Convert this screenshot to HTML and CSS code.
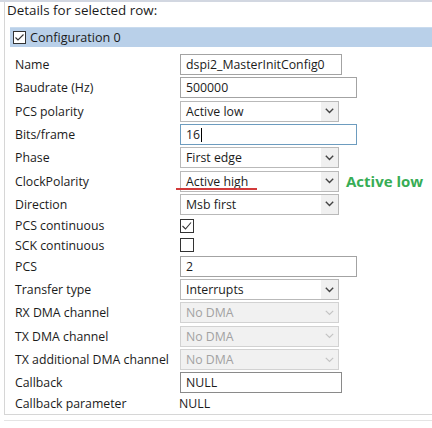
FILE: index.html
```html
<!DOCTYPE html>
<html>
<head>
<meta charset="utf-8">
<link rel="stylesheet" href="styles.css">
</head>
<body>
<div class="panel">
  <div class="title">Details for selected row:</div>
  <div class="group">
    <div class="group-header">
      <span class="cb cb-head"><svg width="13" height="13" viewBox="0 0 13 13"><polyline points="2.5,6.5 5,9 10.5,3.5" fill="none" stroke="#333" stroke-width="1.1"/></svg></span>
      <span class="group-title">Configuration 0</span>
    </div>
    <div class="rows">
      <div class="row"><div class="label">Name</div><div class="field text short">dspi2_MasterInitConfig0</div></div>
      <div class="row"><div class="label">Baudrate (Hz)</div><div class="field text long">500000</div></div>
      <div class="row"><div class="label">PCS polarity</div><div class="field select"><span class="val">Active low</span><span class="arrow"><svg width="9" height="6" viewBox="0 0 9 6"><polyline points="0.8,0.8 4.5,4.5 8.2,0.8" fill="none" stroke="#444" stroke-width="1.4"/></svg></span></div></div>
      <div class="row"><div class="label">Bits/frame</div><div class="field text long focus">16<span class="caret"></span></div></div>
      <div class="row"><div class="label">Phase</div><div class="field select"><span class="val">First edge</span><span class="arrow"><svg width="9" height="6" viewBox="0 0 9 6"><polyline points="0.8,0.8 4.5,4.5 8.2,0.8" fill="none" stroke="#444" stroke-width="1.4"/></svg></span></div></div>
      <div class="row"><div class="label">ClockPolarity</div><div class="field select marked"><span class="val">Active high</span><span class="arrow"><svg width="9" height="6" viewBox="0 0 9 6"><polyline points="0.8,0.8 4.5,4.5 8.2,0.8" fill="none" stroke="#444" stroke-width="1.4"/></svg></span><span class="underline"></span></div><span class="note">Active low</span></div>
      <div class="row"><div class="label">Direction</div><div class="field select"><span class="val">Msb first</span><span class="arrow"><svg width="9" height="6" viewBox="0 0 9 6"><polyline points="0.8,0.8 4.5,4.5 8.2,0.8" fill="none" stroke="#444" stroke-width="1.4"/></svg></span></div></div>
      <div class="row crow"><div class="label">PCS continuous</div><span class="cb"><svg width="14" height="14" viewBox="0 0 14 14"><polyline points="2.5,7 5.5,10 11,3.5" fill="none" stroke="#333" stroke-width="1.1"/></svg></span></div>
      <div class="row crow"><div class="label">SCK continuous</div><span class="cb"></span></div>
      <div class="row"><div class="label">PCS</div><div class="field text long">2</div></div>
      <div class="row"><div class="label">Transfer type</div><div class="field select"><span class="val">Interrupts</span><span class="arrow"><svg width="9" height="6" viewBox="0 0 9 6"><polyline points="0.8,0.8 4.5,4.5 8.2,0.8" fill="none" stroke="#444" stroke-width="1.4"/></svg></span></div></div>
      <div class="row"><div class="label">RX DMA channel</div><div class="field select disabled"><span class="val">No DMA</span><span class="arrow"><svg width="9" height="6" viewBox="0 0 9 6"><polyline points="0.8,0.8 4.5,4.5 8.2,0.8" fill="none" stroke="#c4c4c4" stroke-width="1.2"/></svg></span></div></div>
      <div class="row"><div class="label">TX DMA channel</div><div class="field select disabled"><span class="val">No DMA</span><span class="arrow"><svg width="9" height="6" viewBox="0 0 9 6"><polyline points="0.8,0.8 4.5,4.5 8.2,0.8" fill="none" stroke="#c4c4c4" stroke-width="1.2"/></svg></span></div></div>
      <div class="row"><div class="label">TX additional DMA channel</div><div class="field select disabled"><span class="val">No DMA</span><span class="arrow"><svg width="9" height="6" viewBox="0 0 9 6"><polyline points="0.8,0.8 4.5,4.5 8.2,0.8" fill="none" stroke="#c4c4c4" stroke-width="1.2"/></svg></span></div></div>
      <div class="row"><div class="label">Callback</div><div class="field text short dark">NULL</div></div>
      <div class="row prow"><div class="label">Callback parameter</div><div class="plain">NULL</div></div>
    </div>
  </div>
</div>
<div class="outer-bottom"></div>
</body>
</html>
```
FILE: styles.css
```css
html, body {
  margin: 0;
  padding: 0;
  background: #ffffff;
}
body {
  width: 432px;
  height: 428px;
  overflow: hidden;
  font-family: "Open Sans", "Noto Sans", sans-serif;
  font-size: 12.3px;
  color: #1b1b1b;
  border-top: 2px solid #d2d7e1;
  box-sizing: border-box;
}
.panel {
  margin-left: 4px;
  border-left: 1px solid #d6d6d6;
  border-bottom: 1px solid #d6d6d6;
  height: 413px;
  box-sizing: border-box;
}
.title {
  height: 25px;
  padding-left: 2px;
  font-size: 13.4px;
  line-height: 17px;
}
.group {
  margin-left: 5px;
}
.group-header {
  height: 19px;
  background: #b9d0e9;
  border-top: 1px solid #c9dbee;
  display: flex;
  align-items: center;
  padding-left: 3px;
  gap: 4px;
}
.group-title {
  font-size: 12.6px;
  line-height: 19px;
}
.cb {
  display: inline-block;
  width: 14px;
  height: 14px;
  box-sizing: border-box;
  border: 1px solid #333;
  background: #fff;
  position: relative;
}
.cb svg {
  position: absolute;
  left: -1px;
  top: -1px;
}
.cb-head {
  width: 13px;
  height: 13px;
}
.rows {
  padding-top: 6px;
}
.row {
  display: flex;
  align-items: center;
  height: 23.3px;
  position: relative;
}
.crow {
  height: 19.3px;
}
.prow {
  height: 18px;
}
.label {
  width: 165px;
  padding-left: 5px;
  flex: none;
  white-space: nowrap;
}
.field {
  height: 21px;
  box-sizing: border-box;
  border: 1px solid #a3a3a3;
  background: #fff;
  display: flex;
  align-items: center;
  padding-left: 5px;
  white-space: nowrap;
  position: relative;
}
.text.short { width: 162px; }
.text.long { width: 177px; }
.text.dark { border-color: #8a8a8a; }
.focus { border-color: #6d9cbf; }
.caret {
  display: inline-block;
  width: 1px;
  height: 14px;
  background: #000;
  margin-left: 1px;
}
.select {
  width: 159px;
  border-color: #b9b9b9;
  padding-right: 0;
}
.select .val {
  flex: 1;
}
.select .arrow {
  width: 17px;
  height: 19px;
  background: #f0f0f0;
  display: flex;
  align-items: center;
  justify-content: center;
}
.disabled {
  background: #f1f1f1;
  border-color: #d2d2d2;
  color: #a2a2a2;
}
.disabled .arrow {
  background: #f1f1f1;
}
.underline {
  position: absolute;
  left: -5px;
  top: 16px;
  width: 81px;
  height: 2px;
  background: #d23a3a;
}
.note {
  margin-left: 7px;
  color: #37ad55;
  font-weight: bold;
  font-size: 15px;
}
.plain {
  padding-left: 0;
  margin-left: -1px;
}
.outer-bottom {
  margin-left: 4px;
  margin-top: 5px;
  height: 1px;
  background: #e4e4e4;
}
```
